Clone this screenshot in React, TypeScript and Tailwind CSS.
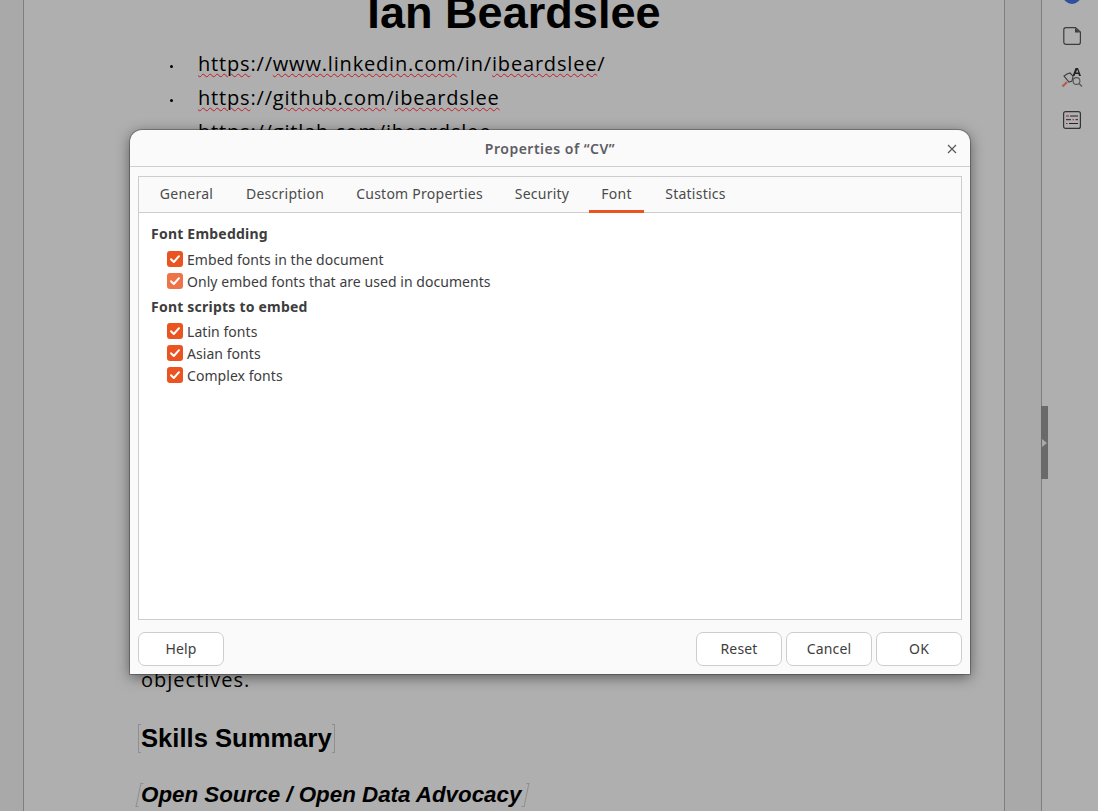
const uiFont = { fontFamily: '"Noto Sans", sans-serif' };

const tabs = [
  { label: 'General', width: 'w-[79px]' },
  { label: 'Description', width: 'w-[102px]' },
  { label: 'Custom Properties', width: 'w-[151px]' },
  { label: 'Security', width: 'w-[78px]' },
  { label: 'Font', width: 'w-[55px]', active: true },
  { label: 'Statistics', width: 'w-[87px]' },
];

const Wavy = ({ children }: { children: string }) => (
  <span className="underline decoration-wavy decoration-[#c01c28] decoration-1 underline-offset-2">{children}</span>
);

const Check = ({ label, faded }: { label: string; faded?: boolean }) => (
  <label className="flex h-[22px] items-center gap-1 pl-[28px] text-[14px] tracking-[0.05px] text-[#3d3d3d]">
    <span className={`flex h-4 w-4 items-center justify-center rounded-[3px] ${faded ? 'bg-[#ef7348]' : 'bg-[#e95420]'}`}>
      <svg width="12" height="12" viewBox="0 0 12 12" fill="none" stroke="white" strokeWidth="2" strokeLinecap="round" strokeLinejoin="round">
        <path d="M2 6.2 4.8 9 10 3.2" />
      </svg>
    </span>
    {label}
  </label>
);

const FooterButton = ({ label }: { label: string }) => (
  <button className="h-[34px] w-[86px] rounded-[7px] border border-[#cdcdcd] bg-white pb-[2px] text-[14px] tracking-[0.15px] text-[#3d3d3d]">
    {label}
  </button>
);

const Dialog = () => (
  <div
    className="absolute left-[130px] top-[130px] flex h-[544px] w-[840px] flex-col rounded-t-[12px] bg-[#fafafa] shadow-[0_3px_14px_rgba(0,0,0,0.5)] ring-1 ring-black/25"
    style={uiFont}
  >
    <div className="relative flex h-[37px] shrink-0 items-center justify-center border-b border-[#cfcfcf]">
      <span className="text-[14px] font-semibold tracking-[0.5px] text-[#5e5c64]">Properties of “CV”</span>
      <svg className="absolute right-[13px] top-[14px]" width="10" height="10" viewBox="0 0 10 10" stroke="#555" strokeWidth="1.1">
        <path d="M1 1l8 8M9 1l-8 8" />
      </svg>
    </div>
    <div className="mx-2 mt-[9px] flex h-[444px] flex-col border border-[#cdcdcd]">
      <div className="flex h-[36px] shrink-0 gap-2 border-b border-[#cdcdcd] pl-2">
        {tabs.map((tab) => (
          <div
            key={tab.label}
            className={`flex h-[36px] items-center justify-center text-[14px] tracking-[0.25px] text-[#4a4a4a] ${tab.width} ${
              tab.active ? 'border-b-[3px] border-[#e95420]' : 'pb-[3px]'
            }`}
          >
            {tab.label}
          </div>
        ))}
      </div>
      <div className="flex-1 bg-white pt-[9px]">
        <div className="flex h-[22px] items-center pl-3 text-[14px] font-bold tracking-[0.22px] text-[#3d3d3d]">Font Embedding</div>
        <div className="pt-[4px]">
          <Check label="Embed fonts in the document" />
          <Check label="Only embed fonts that are used in documents" faded />
        </div>
        <div className="mt-[3px] flex h-[22px] items-center pl-3 text-[14px] font-bold tracking-[0.22px] text-[#3d3d3d]">Font scripts to embed</div>
        <div className="pt-[3px]">
          <Check label="Latin fonts" />
          <Check label="Asian fonts" />
          <Check label="Complex fonts" />
        </div>
      </div>
    </div>
    <div className="mx-2 mt-3 flex justify-between">
      <FooterButton label="Help" />
      <div className="flex gap-1">
        <FooterButton label="Reset" />
        <FooterButton label="Cancel" />
        <FooterButton label="OK" />
      </div>
    </div>
  </div>
);

const Sidebar = () => (
  <div className="relative flex w-[57px] flex-col items-center gap-[24px] overflow-hidden border-l border-[#7f7f7f] bg-[#afafaf] pl-[4px] pt-[27px]">
    <div className="absolute left-[21px] top-[-14px] h-[18px] w-[18px] rounded-full bg-[#2f4f9f]" />
    <svg width="18" height="18" viewBox="0 0 18 18" fill="none" stroke="#3d3d3d" strokeWidth="1.2">
      <path d="M3 .6h9.5L17.4 5v10.2c0 1.2-.8 2.2-2 2.2H3c-1.2 0-2.2-1-2.2-2.2V2.8C.8 1.6 1.8.6 3 .6Z" />
      <path d="M12 1v4.6h5" fill="#3d3d3d" stroke="none" />
    </svg>
    <svg width="22" height="22" viewBox="0 0 22 22" fill="none" className="-my-[2px]">
      <path d="M14.5 1h2.5l3 8h-2l-.6-2h-3.2l-.6 2h-2z M15 5.5h2.4L16.2 2.4z" fill="#222" fillRule="evenodd" />
      <path d="M6 7l-3 2 5 6 3-1 1-5-3-3z" stroke="#3d3d3d" strokeWidth="1.1" />
      <circle cx="15.5" cy="14" r="3.4" stroke="#555" strokeWidth="1.1" />
      <path d="M18 16.5l3 3" stroke="#555" strokeWidth="1.3" />
      <path d="M6 15l-4.5 4.5" stroke="#b5604a" strokeWidth="2.4" />
    </svg>
    <svg width="18" height="18" viewBox="0 0 18 18" fill="none">
      <rect x=".6" y=".6" width="16.8" height="16.8" rx="2" stroke="#333" strokeWidth="1.2" />
      <path d="M7 5h8M3 8.7h5M12.5 8.7h2.5M6 12.5h9" stroke="#222" strokeWidth="1" />
      <path d="M3 5h3M9.5 8.7h1.5M3 12.5h1.5" stroke="#a51d2d" strokeWidth="1" />
    </svg>
  </div>
);

const Page = () => (
  <div className="relative flex w-[982px] shrink-0 flex-col overflow-hidden border-x border-[#7f7f7f] bg-[#afafaf] text-black">
    <h1 className="mt-[-13px] h-[52px] text-center text-[45.1px] font-bold leading-[52px]" style={{ fontFamily: '"Liberation Sans", sans-serif' }}>
      Ian Beardslee
    </h1>
    <ul className="mt-[8px] pl-[174px] text-[20px] leading-[34px] tracking-[0.82px]" style={{ fontFamily: '"Open Sans", sans-serif' }}>
      <li className="relative">
        <span className="absolute left-[-28px] top-[18px] h-[3px] w-[3px] rounded-full bg-black" />
        <Wavy>https</Wavy>://<Wavy>www.linkedin.com</Wavy>/in/<Wavy>ibeardslee</Wavy>/
      </li>
      <li className="relative">
        <span className="absolute left-[-28px] top-[18px] h-[3px] w-[3px] rounded-full bg-black" />
        <Wavy>https</Wavy>://<Wavy>github.com</Wavy>/<Wavy>ibeardslee</Wavy>
      </li>
      <li>https://gitlab.com/ibeardslee</li>
    </ul>
    <p className="mt-[514px] pl-[117px] text-[20px] leading-[34px] tracking-[1px]" style={{ fontFamily: '"Open Sans", sans-serif' }}>
      objectives.
    </p>
    <div className="pl-[114px]" style={{ fontFamily: '"Liberation Sans", sans-serif' }}>
      <h2 className="mt-[26px] flex h-[30px] items-center text-[25.6px] font-bold">
        <span className="h-[29px] w-[3px] border-y border-l border-[#8f8f8f]" />
        {'Skills Summary'}
        <span className="h-[29px] w-[3px] border-y border-r border-[#8f8f8f]" />
      </h2>
      <h3 className="mt-[27px] flex h-[30px] items-center text-[22.35px] font-bold italic">
        <span className="h-[24px] w-[3px] -skew-x-12 border-y border-l border-[#8f8f8f]" />
        {'Open Source / Open Data Advocacy'}
        <span className="ml-[3px] h-[24px] w-[3px] -skew-x-12 border-y border-r border-[#8f8f8f]" />
      </h3>
    </div>
  </div>
);

export default function App() {
  return (
    <div className="relative flex h-[811px] w-[1098px] overflow-hidden bg-[#a9a9a9]">
      <div className="w-[23px] shrink-0" />
      <Page />
      <div className="w-[36px] shrink-0" />
      <Sidebar />
      <div className="absolute left-[1041px] top-[406px] flex h-[73px] w-[7px] items-center justify-center bg-[#6a6a6a]">
        <div className="h-0 w-0 border-y-[4px] border-l-[5px] border-y-transparent border-l-[#a9a9a9]" />
      </div>
      <Dialog />
    </div>
  );
}
